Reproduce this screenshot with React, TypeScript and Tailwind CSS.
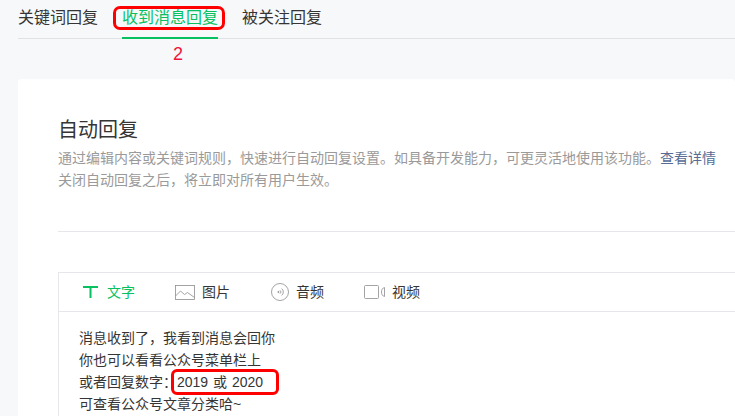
const font = { fontFamily: '"Liberation Sans", "Noto Sans CJK SC", sans-serif' };

function TextIcon() {
  return (
    <svg width="15" height="12" viewBox="0 0 15 12" fill="none" stroke="#07c160" strokeWidth="2">
      <path d="M0 1h15M7.5 1v11" />
    </svg>
  );
}

function ImageIcon() {
  return (
    <svg width="20" height="15" viewBox="0 0 20 15" fill="none" stroke="#8d8d8d" strokeWidth="0.8">
      <rect x="0.5" y="0.5" width="19" height="14" />
      <path d="M0.5 11l5-5 4 3.5 3-2 7 5" />
    </svg>
  );
}

function AudioIcon() {
  return (
    <svg width="18" height="18" viewBox="0 0 18 18" fill="none" stroke="#8d8d8d" strokeWidth="0.8">
      <circle cx="9" cy="9" r="8.5" />
      <path d="M9 7.3a2.2 2.2 0 0 1 0 3.4M10.7 5.6a4.4 4.4 0 0 1 0 6.8" />
      <circle cx="7.4" cy="9" r="0.6" fill="#8d8d8d" />
    </svg>
  );
}

function VideoIcon() {
  return (
    <svg width="21" height="14" viewBox="0 0 21 14" fill="none" stroke="#8d8d8d" strokeWidth="0.8">
      <rect x="0.5" y="0.5" width="14" height="13" rx="1" />
      <path d="M20.5 2.5c-2 .5-3 2-3 4.5s1 4 3 4.5z" />
    </svg>
  );
}

function EditorTab({ icon, label, active, width }: { icon: React.ReactNode; label: string; active?: boolean; width: string }) {
  return (
    <div className={`flex items-center ${active ? "gap-[9px]" : "gap-[7px]"} ${width}`}>
      {icon}
      <span className={active ? "text-[#07c160] text-[14px]" : "text-[#353535] text-[14px]"}>{label}</span>
    </div>
  );
}

export default function App() {
  return (
    <div style={font} className="w-[735px] h-[416px] overflow-hidden bg-[#f6f8f9] pl-[18px]">
      {/* Tabs */}
      <div className="flex h-[39px] border-b border-[#e0e2e5] gap-[25px] text-[16px] leading-[36px] text-[#353535] whitespace-nowrap">
        <div className="w-[79px]">关键词回复</div>
        <div className="relative w-[96px] -mb-px border-b-2 border-[#07c160] text-[#07c160] text-center">
          收到消息回复
          <div className="absolute left-[-9px] top-[6px] w-[112px] h-[24px] border-[3px] border-[#f00] rounded-[7px]" />
          <div className="absolute left-[8px] w-full top-[39px] text-center text-[#f0143c] text-[18px] leading-[30px]">2</div>
        </div>
        <div className="w-[80px] -ml-px">被关注回复</div>
      </div>

      {/* Card */}
      <div className="mt-[40px] bg-white rounded-t-[4px] pl-[40px] h-[337px]">
        <h2 className="pt-[36px] text-[20px] leading-[30px] text-[#353535]">自动回复</h2>
        <div className="mt-[2px] text-[14px] leading-[22px] text-[#9a9a9a] whitespace-nowrap">
          <p>
            {"通过编辑内容或关键词规则\uFF0C快速进行自动回复设置。如具备开发能力\uFF0C可更灵活地使用该功能。"}
            <span className="text-[#576b95]">查看详情</span>
          </p>
          <p>{"关闭自动回复之后\uFF0C将立即对所有用户生效。"}</p>
        </div>
        <div className="mt-[40px] border-t border-[#e7e7eb]" />

        {/* Editor */}
        <div className="mt-[40px] border-l border-t border-[#e7e7eb] h-[200px]">
          <div className="flex items-center h-[39px] pl-[24px] border-b border-[#e7e7eb]">
            <EditorTab width="w-[92px]" active icon={<TextIcon />} label="文字" />
            <EditorTab width="w-[96px]" icon={<ImageIcon />} label="图片" />
            <EditorTab width="w-[93px]" icon={<AudioIcon />} label="音频" />
            <EditorTab width="w-[70px]" icon={<VideoIcon />} label="视频" />
          </div>
          <div className="pl-[20px] pt-[15px] text-[14px] leading-[22px] text-[#353535] whitespace-nowrap">
            <p>{"消息收到了\uFF0C我看到消息会回你"}</p>
            <p>你也可以看看公众号菜单栏上</p>
            <p className="relative">
              {"或者回复数字\uFF1A"}<span className="[word-spacing:1px]">2019 或 2020</span>
              <span className="absolute left-[92px] top-[-2px] w-[108px] h-[26px] border-[3px] border-[#f00] rounded-[6px]" />
            </p>
            <p>可查看公众号文章分类哈~</p>
          </div>
        </div>
      </div>
    </div>
  );
}
